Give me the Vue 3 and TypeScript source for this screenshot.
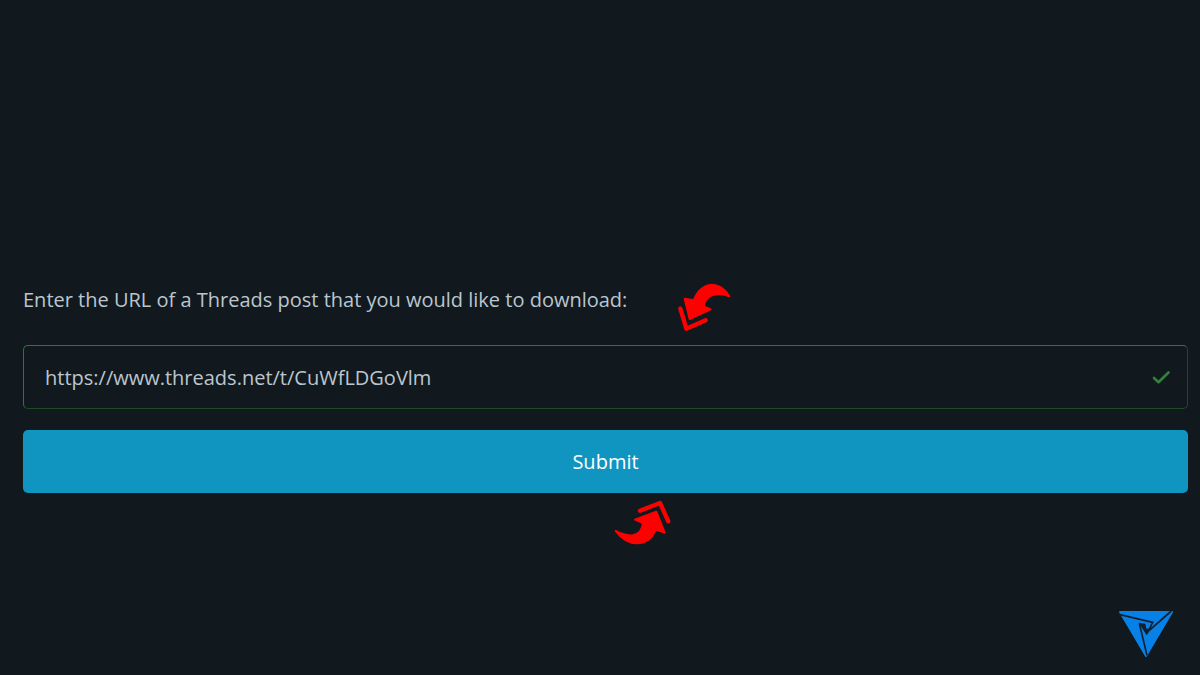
<script setup lang="ts">
import { ref } from 'vue'

const url = ref('https://www.threads.net/t/CuWfLDGoVlm')
</script>

<template>
  <main class="page">
    <form class="form" @submit.prevent>
      <label class="label" for="post-url">Enter the URL of a Threads post that you would like to download:</label>
      <div class="field">
        <input id="post-url" v-model="url" class="input" type="text" spellcheck="false" />
        <svg class="check" viewBox="0 0 20 16" aria-hidden="true">
          <path d="M3 8 7.5 12.2 17.5 2.5" />
        </svg>
      </div>
      <button class="submit" type="submit">Submit</button>

      <svg class="arrow arrow-top" viewBox="0 0 270 210" aria-hidden="true">
        <path class="head" d="M74 86 L101 91 C112 62 133 45 155 44 C177 44 197 59 208 79 C184 69 164 68 146 81 Q134 91 131 109 L152 118 L89 147 Z" />
        <path class="chevron" d="M61 116 L79 176 L137 151" />
      </svg>
      <svg class="arrow arrow-bottom" viewBox="0 0 270 210" aria-hidden="true">
        <path class="head" d="M47 138 C63 161 88 175 112 175 C137 174 157 159 167 134 L194 143 L169 80 L105 104 L129 114 C127 135 115 147 99 151 C81 153 64 147 47 138 Z" />
        <path class="chevron" d="M120 77 L180 54 L205 109" />
      </svg>
    </form>

    <svg class="logo" viewBox="0 0 240 210" role="img" aria-label="Logo">
      <path class="logo-shape" d="M45 36 H201 L123 168 Z" />
      <path class="logo-line" d="M42 43 L143 67 L134 86 M103 70 L126 166" />
      <path class="logo-line" d="M132 92 L199 33" />
      <path class="logo-hole" d="M101 68 L121 71 L124 86 L140 84 L125 106 Z" />
    </svg>
  </main>
</template>

<style>
body {
  margin: 0;
  background: #11191f;
}
</style>

<style scoped>
.page {
  position: relative;
  box-sizing: border-box;
  min-height: 100vh;
  padding: 284px 12px 0 23px;
  background: #11191f;
  color: #bbc6ce;
  font-family: "Open Sans", "Noto Sans", sans-serif;
  font-size: 20px;
  line-height: 32px;
}

.form {
  position: relative;
  display: flex;
  flex-direction: column;
}

.label {
  margin-bottom: 29px;
}

.field {
  display: flex;
  align-items: center;
  box-sizing: border-box;
  height: 64px;
  margin-bottom: 21px;
  padding: 2px 16px 0 21px;
  border: 1px solid #2a7a30;
  border-right-color: #20492a;
  border-bottom-color: #20492a;
  border-radius: 5px;
}

.input {
  flex: 1;
  min-width: 0;
  padding: 0;
  border: 0;
  outline: 0;
  background: transparent;
  color: inherit;
  font: inherit;
}

.check {
  width: 20px;
  height: 16px;
  fill: none;
  stroke: #2e8437;
  stroke-width: 2.6;
  stroke-linecap: round;
  stroke-linejoin: round;
}

.submit {
  height: 63px;
  padding: 0;
  border: 0;
  border-radius: 5px;
  background: #1095c1;
  color: #fff;
  font: inherit;
  cursor: pointer;
}

.arrow {
  position: absolute;
  width: 90px;
  height: 70px;
  fill: #f00;
  pointer-events: none;
}

.arrow-top {
  top: -14px;
  left: 637px;
}

.arrow-bottom {
  top: 201px;
  left: 577px;
}

.head {
  stroke: #f00;
  stroke-width: 6;
  stroke-linejoin: round;
}

.chevron {
  fill: none;
  stroke: #f00;
  stroke-width: 13;
  stroke-linecap: round;
  stroke-linejoin: round;
}

.logo {
  position: absolute;
  right: 15px;
  bottom: 5px;
  width: 80px;
  height: 70px;
}

.logo-shape {
  fill: #0781e8;
  stroke: #0781e8;
  stroke-width: 6;
  stroke-linejoin: round;
}

.logo-line {
  fill: none;
  stroke: #11202c;
  stroke-width: 5;
}

.logo-hole {
  fill: #11202c;
}
</style>
